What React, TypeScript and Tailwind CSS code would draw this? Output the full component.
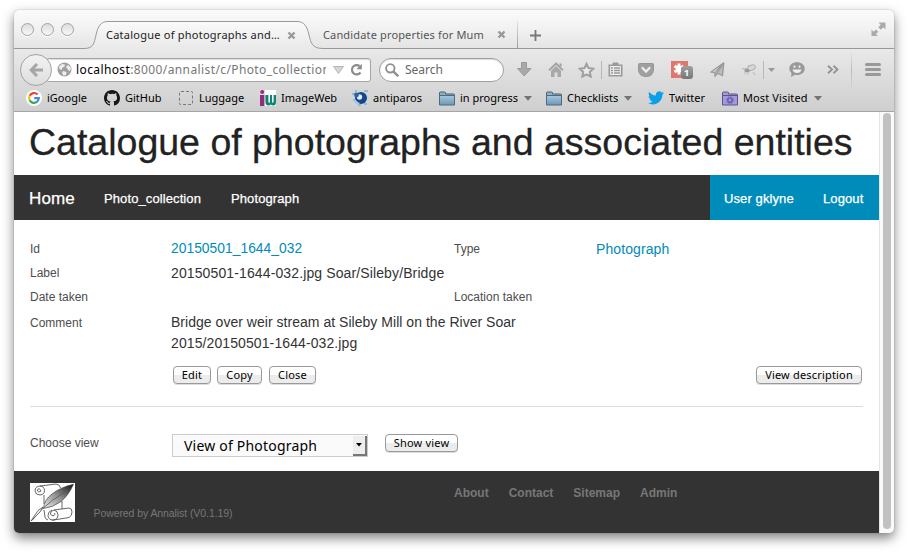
import type { ReactNode } from "react";

const UI = "font-['Noto_Sans',sans-serif]";

function Cell({ w, children }: { w: string; children?: ReactNode }) {
  return <div className={`flex h-full shrink-0 items-center justify-center ${w}`}>{children}</div>;
}

function Separator({ className }: { className: string }) {
  return <div className={`w-px shrink-0 ${className}`} />;
}

function Light() {
  return (
    <span className="h-[13px] w-[13px] rounded-full border border-[#a3a3a3] bg-linear-to-b from-[#dcdcdc] to-[#f8f8f8] shadow-[0_1px_0_#fff]" />
  );
}

function CloseGlyph() {
  return (
    <svg width="9" height="9" viewBox="0 0 9 9">
      <path d="M1.5 1.5 7.5 7.5M7.5 1.5 1.5 7.5" stroke="#999" strokeWidth="2.4" />
      <path d="M3.5 4.5h2" stroke="#999" strokeWidth="2" />
    </svg>
  );
}

function Caret() {
  return (
    <svg className="ml-1.5 shrink-0" width="8" height="5" viewBox="0 0 8 5">
      <path d="M0 0h8L4 4.8z" fill="#737373" />
    </svg>
  );
}

function Folder() {
  return (
    <svg width="16" height="15" viewBox="0 0 16 15">
      <defs>
        <linearGradient id="folder" x1="0" y1="0" x2="0" y2="1">
          <stop offset="0" stopColor="#a9c8dc" />
          <stop offset="1" stopColor="#6b97b6" />
        </linearGradient>
      </defs>
      <path d="M.5 13.5V2q0-1 1-1h4q1 0 1 1v1h8q1 0 1 1v9.500z" fill="#8fb0c5" stroke="#48606f" />
      <path d="M.5 4.500h15v9.500H.5z" fill="url(#folder)" stroke="#4c6a80" />
    </svg>
  );
}

function VisitedFolder() {
  return (
    <svg width="16" height="15" viewBox="0 0 16 15">
      <path d="M.5 13.500V2q0-1 1-1h4q1 0 1 1v1h8q1 0 1 1v9.500z" fill="#a59dd2" stroke="#5d548f" />
      <path d="M.5 4.500h15v9.500H.5z" fill="#a39bd8" stroke="#5d548f" />
      <circle cx="8" cy="9.200" r="2.200" fill="none" stroke="#6a5fb8" strokeWidth="1.600" />
      <circle cx="8" cy="9.200" r="3.500" fill="none" stroke="#6a5fb8" strokeWidth="1" strokeDasharray="1.370 1.370" />
    </svg>
  );
}

function GoogleIcon() {
  return (
    <svg width="16" height="16" viewBox="0 0 16 16">
      <circle cx="8" cy="8" r="8" fill="#fff" />
      <g fill="none" strokeWidth="2.200">
        <path d="M11.600 4.500A4.900 4.900 0 0 0 3.700 5.700" stroke="#ea4335" />
        <path d="M3.700 5.700a4.900 4.900 0 0 0 0 4.600" stroke="#fbbc05" />
        <path d="M3.700 10.300a4.900 4.900 0 0 0 7.500 1.400" stroke="#34a853" />
        <path d="M8.200 8.100h4.600a4.900 4.900 0 0 1-1.600 3.600" stroke="#4285f4" />
      </g>
    </svg>
  );
}

function GithubIcon() {
  return (
    <svg width="16" height="16" viewBox="0 0 16 16">
      <path
        fill="#181616"
        d="M8 0C3.580 0 0 3.580 0 8c0 3.540 2.290 6.530 5.470 7.590.4.070.55-.170.55-.380 0-.190-.010-.820-.010-1.490-2.010.370-2.530-.490-2.690-.940-.090-.230-.480-.940-.820-1.130-.280-.150-.680-.520-.010-.530.630-.010 1.080.580 1.230.820.720 1.210 1.870.870 2.330.660.070-.520.280-.870.510-1.070-1.780-.2-3.640-.890-3.640-3.950 0-.870.310-1.590.820-2.150-.080-.2-.360-1.020.080-2.120 0 0 .670-.210 2.200.820A7.600 7.600 0 0 1 8 3.870c.680 0 1.360.090 2 .260 1.530-1.040 2.200-.820 2.200-.820.440 1.100.160 1.920.080 2.120.510.560.820 1.270.820 2.150 0 3.070-1.870 3.750-3.650 3.950.290.250.540.730.540 1.480 0 1.070-.010 1.930-.010 2.200 0 .210.150.460.550.380A8 8 0 0 0 16 8c0-4.420-3.580-8-8-8z"
      />
    </svg>
  );
}

function ImageWebIcon() {
  return (
    <svg width="16" height="16" viewBox="0 0 16 16">
      <path d="M0 0h16v16H0z" fill="#fff" />
      <path d="M0 0h5v16H0z" fill="#e3dbe0" />
      <circle cx="2.200" cy="2" r="2" fill="#8f2d7c" />
      <path d="M0 5h4.300v11H0z" fill="#8f2d7c" />
      <path d="M5.400 5h3v6.500q0 1.200.8 1.200t.8-1.200V5h2v6.500q0 1.200.8 1.200t.8-1.200V5H16v7q0 3.500-2.800 3.500-1.400 0-2.300-1-.8 1-2.300 1-3.200 0-3.200-3.500z" fill="#0d8474" />
    </svg>
  );
}

function AntiparosIcon() {
  return (
    <svg width="16" height="16" viewBox="0 0 16 16">
      <path d="M0 0h16v16H0z" fill="#cdd6dd" />
      <path d="M0 3h3v2H0zM3 0h2v2H3zM1 9h3v2H1zM12 13h3v2h-3zM6 14h3v2H6zM12 0h4v2h-4z" fill="#9fb6ca" />
      <circle cx="9" cy="8" r="6" fill="#174689" />
      <circle cx="7.500" cy="7" r="2.700" fill="#e4ecf3" />
      <circle cx="4.500" cy="5" r="2.400" fill="#2d62a8" />
      <path d="M3 9q2 3 5 4l-3 2-3-3z" fill="#b3c6d8" />
    </svg>
  );
}

function TwitterIcon() {
  return (
    <svg width="16" height="14" viewBox="0 0 24 20">
      <path
        fill="#0a9fe8"
        d="M24 2.400c-.900.400-1.800.700-2.800.800 1-.600 1.800-1.600 2.200-2.700-1 .600-2 1-3.100 1.200A4.920 4.920 0 0 0 11.900 6.200C7.700 6 4.100 4 1.700 1 .4 3.200 1 6.100 3.200 7.600c-.800 0-1.600-.2-2.200-.600-.1 2.300 1.600 4.400 3.900 4.900-.7.200-1.500.2-2.200.1.600 2 2.400 3.400 4.600 3.400A9.900 9.900 0 0 1 0 17.500 13.940 13.940 0 0 0 7.500 19.700c9.100 0 14.300-7.700 14-14.600 1-.700 1.800-1.600 2.500-2.700z"
      />
    </svg>
  );
}

function TitleBar() {
  return (
    <div className="flex h-[39px] shrink-0 items-end bg-linear-to-b from-[#fbfbfb] via-[#f1f1f1] to-[#e4e4e4]">
      <div className="flex h-full w-[70px] shrink-0 gap-[7px] border-b border-[#999] pt-[13px] pl-[7px]">
        <Light />
        <Light />
        <Light />
      </div>
      <div className="relative h-7 w-[239px] shrink-0">
        <svg className="absolute inset-0" width="240" height="28" viewBox="0 0 240 28">
          <defs>
            <linearGradient id="tab" x1="0" y1="0" x2="0" y2="1">
              <stop offset="0" stopColor="#fafafa" />
              <stop offset="1" stopColor="#e9e9e9" />
            </linearGradient>
          </defs>
          <path d="M0 27.500C10 27.500 10 22 12 14 14 5 17 .5 24 .5H213C220 .5 223 5 225 14 227 22 228 27.500 239 27.500V28H0z" fill="url(#tab)" />
          <path d="M0 27.500C10 27.500 10 22 12 14 14 5 17 .5 24 .5H213C220 .5 223 5 225 14 227 22 228 27.500 239 27.500" fill="none" stroke="#999" />
        </svg>
        <div className="relative flex h-full items-center pl-[22px] text-[11px] text-[#222]">
          <span className="w-[181px] tracking-[0.240px] whitespace-nowrap">Catalogue of photographs and…</span>
          <CloseGlyph />
        </div>
      </div>
      <div className="flex h-7 w-[194px] shrink-0 items-center border-b border-[#999] text-[11px] text-[#555]">
        <span className="w-[174px] pt-px tracking-[0.150px] whitespace-nowrap">Candidate properties for Mum</span>
        <CloseGlyph />
      </div>
      <div className="h-7 w-px bg-linear-to-b from-[#e4e4e4] to-[#999]" />
      <div className="flex h-full flex-1 justify-between border-b border-[#999]">
        <svg className="mt-[20px] ml-3" width="11" height="11" viewBox="0 0 11 11">
          <path d="M5.500 0v11M0 5.500h11" stroke="#777" strokeWidth="1.800" />
        </svg>
        <svg className="mt-3 mr-2" width="15" height="15" viewBox="0 0 15 15">
          <path d="M7.500.5h7v7L12.300 5.300 9.800 7.800 7.300 5.300 9.700 2.800zM7 14H.5V7.500L2.700 9.700 5 7.400 7.300 9.700 4.900 12z" fill="#aaa" />
        </svg>
      </div>
    </div>
  );
}

function AddressBar() {
  return (
    <div className="flex h-[41px] shrink-0 items-center">
      <div className="z-10 ml-1.5 flex h-8 w-8 shrink-0 items-center justify-center rounded-full border border-[#a3a3a3] bg-linear-to-b from-[#f2f2f2] to-[#dedede]">
        <svg width="14" height="14" viewBox="0 0 14 14">
          <path d="M8 1 2.200 7 8 13M2.500 7H14" fill="none" stroke="#a6a6a6" strokeWidth="3" />
        </svg>
      </div>
      <div className="-ml-[6px] flex h-6 w-[325px] shrink-0 items-center rounded-[3px] border border-[#a5a5a5] bg-white pl-[10px] shadow-[inset_0_1px_1px_#ddd]">
        <svg width="15" height="15" viewBox="0 0 15 15">
          <circle cx="7.500" cy="7.500" r="7" fill="#a0a0a0" />
          <path d="M2 4.500 5 2l3 .5-.5 2-2 1-1 2.500L2.500 7zM8.500 5l3-2 2.500 3-1 3-2-1-1-2zM6 9l3.500 1-.5 3-2.500.8L5 11z" fill="#eee" />
        </svg>
        <div className="ml-[4px] w-[250px] overflow-hidden text-[12px] tracking-[0.390px] whitespace-nowrap text-[#777]">
          <span className="text-black">localhost</span>:8000/annalist/c/Photo_collection
        </div>
        <svg className="ml-[7px]" width="11" height="8" viewBox="0 0 11 8">
          <path d="M.5.5h10L5.500 7.500z" fill="#d6d6d6" stroke="#b5b5b5" />
        </svg>
        <svg className="ml-[6px]" width="13" height="13" viewBox="0 0 13 13">
          <path d="M10.500 9.500A4.700 4.700 0 1 1 9.500 3" fill="none" stroke="#8c8c8c" strokeWidth="2.200" />
          <path d="M11.800.8V6.300H6.300z" fill="#8c8c8c" />
        </svg>
      </div>
      <div className="ml-2 flex h-6 w-[125px] shrink-0 items-center rounded-full border border-[#a0a0a0] bg-white pl-[5px] shadow-[inset_0_1px_1px_#ddd]">
        <svg width="14" height="14" viewBox="0 0 14 14">
          <circle cx="5.300" cy="5.300" r="4.200" fill="none" stroke="#909090" strokeWidth="1.900" />
          <path d="m8.300 8.300 5 5" stroke="#909090" strokeWidth="2.400" />
        </svg>
        <span className="ml-[6px] text-[12px] text-[#666]">Search</span>
      </div>
      <div className="ml-1 flex h-full flex-1 items-center">
        <Cell w="w-8">
          <svg width="15" height="15" viewBox="0 0 15 15">
            <path d="M4.500.5h5v6h4.500L7.200 14 .5 6.500h4z" fill="#a8a8a8" stroke="#999" />
          </svg>
        </Cell>
        <Cell w="w-8">
          <svg width="16" height="15" viewBox="0 0 16 15">
            <path d="M1 8.300 8 1.500l7 6.800" fill="none" stroke="#a0a0a0" strokeWidth="1.800" />
            <path d="M3 8.800 8 4l5 4.800V15H9.500v-4.500h-3V15H3z" fill="#a8a8a8" />
            <path d="M11.500 1.500h2v3h-2z" fill="#a0a0a0" />
          </svg>
        </Cell>
        <Cell w="w-[29px]">
          <svg width="17" height="16" viewBox="0 0 17 16">
            <path d="m8.500 1.800 2 4.300 4.800.6-3.500 3.200.9 4.700-4.200-2.300-4.200 2.300.9-4.700L1.700 6.700l4.800-.6z" fill="#e9e9e9" stroke="#a0a0a0" strokeWidth="2" />
          </svg>
        </Cell>
        <Separator className="h-[18px] bg-[#b8b8b8]" />
        <Cell w="w-[27px]">
          <svg width="15" height="15" viewBox="0 0 15 15">
            <path d="M5 3V1h5v2" fill="#999" stroke="#999" />
            <path d="M1.300 3.300h12.400v10.400H1.300z" fill="#eee" stroke="#999" strokeWidth="1.600" />
            <path d="M3 6h2m1 0h6M3 8.500h2m1 0h6M3 11h2m1 0h6" stroke="#999" strokeWidth="1.400" />
          </svg>
        </Cell>
        <Cell w="w-[34px]">
          <svg width="16" height="14" viewBox="0 0 16 14">
            <path d="M1.500.5h13q1 0 1 1V6Q15.500 13.500 8 13.500T.5 6V1.500q0-1 1-1z" fill="#a0a0a0" stroke="#959595" />
            <path d="m4.500 5 3.500 3.500L11.500 5" fill="none" stroke="#eee" strokeWidth="2.300" strokeLinecap="round" />
          </svg>
        </Cell>
        <Cell w="w-9">
          <div className="relative -left-[2px] h-[17px] w-[17px] bg-[#dd7770]">
            <svg width="17" height="17" viewBox="0 0 17 17">
              <path d="M8 2.500v11M3.500 5l9 6M3.500 11l9-6" stroke="#fff" strokeWidth="3" />
            </svg>
            <span className="absolute top-[5px] left-[10px] flex h-[13px] w-3 items-center justify-center rounded-[3px] bg-linear-to-b from-[#a0a0a0] to-[#777] text-[9px] font-bold text-white">
              1
            </span>
          </div>
        </Cell>
        <Cell w="w-9">
          <svg width="15" height="15" viewBox="0 0 15 15">
            <path d="M13.800.8 1 10l3.800.7z" fill="#d5d5d5" stroke="#999" strokeWidth="1.200" />
            <path d="M13.800.8 7 11l5.500 2.500zM5 10.500V14.300l2-2.800" fill="#bbb" stroke="#999" strokeWidth="1.300" />
          </svg>
        </Cell>
        <Cell w="w-7">
          <svg width="16" height="14" viewBox="0 0 16 14">
            <path d="M1 6q3-1 5 0l4 1M3 11l4-4M6 12l2-4M12 9l2 3M9 5 7 2" fill="none" stroke="#b5b5b5" />
            <ellipse cx="10.500" cy="5" rx="4" ry="2.500" fill="#d8d8d8" stroke="#b0b0b0" transform="rotate(-25 10 5)" />
            <ellipse cx="6" cy="7.500" rx="2.800" ry="1.800" fill="#999" />
          </svg>
        </Cell>
        <Separator className="h-[18px] bg-[#b8b8b8]" />
        <Cell w="w-[15px]">
          <svg width="7" height="4" viewBox="0 0 7 4">
            <path d="M0 0h7L3.500 4z" fill="#999" />
          </svg>
        </Cell>
        <Cell w="w-9">
          <svg width="16" height="15" viewBox="0 0 16 15">
            <path d="M8 .3c4.300 0 7.700 2.600 7.700 6.400S12.300 13 8 13q-1 0-2-.2L2 15l.6-3.800Q.3 9.500.3 6.700C.3 2.900 3.700.3 8 .3z" fill="#999" />
            <path d="M5.500 3.500v2.200M10.500 3.500v2.200" stroke="#eee" strokeWidth="1.800" />
            <path d="M3.500 7.500h9Q11.500 11 8 11T3.500 7.500z" fill="#eee" />
          </svg>
        </Cell>
        <Cell w="w-9">
          <svg width="12" height="9" viewBox="0 0 12 9">
            <path d="m1 .7 4 3.800-4 3.800M6.500.7l4 3.800-4 3.800" fill="none" stroke="#949494" strokeWidth="1.900" />
          </svg>
        </Cell>
        <Separator className="h-9 bg-linear-to-b from-[#e2e2e2] via-[#bbb] to-[#d5d5d5]" />
        <Cell w="w-[42px]">
          <div className="flex flex-col gap-[2px]">
            <span className="h-[3px] w-4 rounded-full bg-[#999]" />
            <span className="h-[3px] w-4 rounded-full bg-[#999]" />
            <span className="h-[3px] w-4 rounded-full bg-[#999]" />
          </div>
        </Cell>
      </div>
    </div>
  );
}

function Bookmark({ w, icon, label, caret = false }: { w: string; icon: ReactNode; label: string; caret?: boolean }) {
  return (
    <div className={`flex shrink-0 items-center ${w}`}>
      <span className="mr-[5px] flex w-4 shrink-0 justify-center">{icon}</span>
      <span className="whitespace-nowrap">{label}</span>
      {caret && <Caret />}
    </div>
  );
}

function BookmarksBar() {
  return (
    <div className="flex h-[22px] shrink-0 items-start border-b border-[#a5a5a5] pl-3">
      <div className="flex h-4 items-center text-[11px] text-black">
        <Bookmark w="w-[78px]" icon={<GoogleIcon />} label="iGoogle" />
        <Bookmark w="w-[74px]" icon={<GithubIcon />} label="GitHub" />
        <Bookmark
          w="w-[82px]"
          icon={<span className="h-[14px] w-[14px] rounded-[2px] border border-dashed border-[#777]" />}
          label="Luggage"
        />
        <Bookmark w="w-[92px]" icon={<ImageWebIcon />} label="ImageWeb" />
        <Bookmark w="w-[87px]" icon={<AntiparosIcon />} label="antiparos" />
        <Bookmark w="w-[107px]" icon={<Folder />} label="in progress" caret />
        <Bookmark w="w-[102px]" icon={<Folder />} label="Checklists" caret />
        <Bookmark w="w-[74px]" icon={<TwitterIcon />} label="Twitter" />
        <Bookmark w="w-[110px] tracking-[0.120px]" icon={<VisitedFolder />} label="Most Visited" caret />
      </div>
    </div>
  );
}

function Button({ w, children }: { w: string; children: ReactNode }) {
  return (
    <button
      className={`flex h-[18px] shrink-0 items-center justify-center rounded-[4px] border border-[#999] bg-linear-to-b from-white from-50% to-[#ececec] to-50% text-[11px] tracking-[0.180px] whitespace-nowrap text-black shadow-[0_1px_0_#ddd] ${UI} ${w}`}
    >
      {children}
    </button>
  );
}

function Label({ children }: { children: ReactNode }) {
  return <span className="text-[12px] text-[#4d4d4d]">{children}</span>;
}

function PageHeader() {
  return (
    <>
      <h1 className="h-[63px] shrink-0 pl-[15px] text-[37.5px] leading-[60px] whitespace-nowrap text-[#222] [-webkit-text-stroke:0.3px_#222]">
        Catalogue of photographs and associated entities
      </h1>
      <nav className="flex h-[45px] shrink-0 items-center bg-[#333] pt-[2px] text-[13px] tracking-[0.1px] text-white [-webkit-text-stroke:0.25px_white]">
        <a className="w-[75px] pl-[15px] text-[17px]">Home</a>
        <a className="w-[127px] pl-[15px]">Photo_collection</a>
        <a className="pl-[15px]">Photograph</a>
        <div className="-mt-[2px] ml-auto flex h-[45px] w-[169px] items-center bg-[#008cba] pt-[2px]">
          <a className="w-[99px] pl-[14px]">User gklyne</a>
          <a className="pl-[14px]">Logout</a>
        </div>
      </nav>
    </>
  );
}

function RecordView() {
  return (
    <main className="flex flex-1 flex-col px-4 pt-[17px]">
      <div className="grid auto-rows-[24px] grid-cols-[141px_283px_142px_1fr] items-center text-[14px] text-[#333]">
        <Label>Id</Label>
        <a className="text-[13.8px] tracking-[0.040px] text-[#008cba]">20150501_1644_032</a>
        <Label>Type</Label>
        <a className="tracking-[0.1px] text-[#008cba]">Photograph</a>
        <Label>Label</Label>
        <span className="col-span-3 tracking-[0.120px] whitespace-nowrap">20150501-1644-032.jpg Soar/Sileby/Bridge</span>
        <Label>Date taken</Label>
        <span />
        <Label>Location taken</Label>
      </div>
      <div className="mt-[3px] flex text-[14px] leading-[21px] text-[#333]">
        <div className="w-[141px]">
          <Label>Comment</Label>
        </div>
        <p>
          <span className="tracking-[0.030px]">Bridge over weir stream at Sileby Mill on the River Soar</span>
          <br />
          <span className="tracking-[0.100px]">2015/20150501-1644-032.jpg</span>
        </p>
      </div>
      <div className="mt-[12px] flex pl-[143px]">
        <Button w="w-[38px]">Edit</Button>
        <Button w="ml-[6px] w-[45px]">Copy</Button>
        <Button w="ml-[7px] w-[47px]">Close</Button>
        <Button w="mr-px ml-auto w-[106px]">View description</Button>
      </div>
      <hr className="mt-[22px] border-[#ddd]" />
      <div className="mt-[27px] flex">
        <div className="w-[142px] leading-4">
          <Label>Choose view</Label>
        </div>
        <div className={`flex h-[23px] w-[196px] items-center justify-between border border-[#ccc] bg-[#fafafa] pl-[11px] text-[14px] text-black ${UI}`}>
          <span className="tracking-[0.200px] whitespace-nowrap">View of Photograph</span>
          <span className="flex h-[20px] w-[14px] items-center justify-center border-r-2 border-b-2 border-[#777] bg-[#eee]">
            <svg width="6" height="4" viewBox="0 0 6 4">
              <path d="M0 0h6L3 3.500z" fill="#000" />
            </svg>
          </span>
        </div>
        <Button w="ml-[17px] w-[73px]">Show view</Button>
      </div>
    </main>
  );
}

function ScrollLogo() {
  return (
    <svg className="bg-white" width="45" height="39" viewBox="0 0 45 39">
      <defs>
        <linearGradient id="quill" x1="0" y1="1" x2="1" y2="0">
          <stop offset="0" stopColor="#e8e8e8" />
          <stop offset="0.450" stopColor="#999" />
          <stop offset="0.800" stopColor="#444" />
          <stop offset="1" stopColor="#111" />
        </linearGradient>
      </defs>
      <g fill="none" stroke="#555" strokeWidth="0.900">
        <path d="M10 3 26 1q4 .5 4.500 4M14 12v9M32 18v8M14 27l1 7q0 2 3 3" />
        <path d="M10 3q-5 .5-5 5 .5 4 5 4 4.500-.5 4.500-4.500T10 3M9.500 5.500q-2.500.5-2 2.500 1 1.500 3 .5 1-2-1-2" />
        <path d="M22 27q-4 1.500-4 5.500.5 4.500 5 4.500 5-.5 5-5 0-4-4-5-4 1-3.500 4 1 2.500 3.500 1.500 1.500-1 .5-2.500" />
        <path d="m24 27 15-2q3 0 3 4t-3 5.500L22 37.300" />
      </g>
      <path d="M43.500 1.200Q30 4.500 22 11 14 17 13.500 25.500 23 24.500 31 18.500q7-5.500 12.500-17.300z" fill="url(#quill)" stroke="#333" strokeWidth=".6" />
      <path d="M38 7Q21 17 10 28L2 37.500" fill="none" stroke="#555" strokeWidth=".8" />
      <path d="M1 38 8 27.500l5-3.500-3 5z" fill="#eee" stroke="#444" strokeWidth=".7" />
    </svg>
  );
}

function Footer() {
  return (
    <footer className="flex h-[62px] shrink-0 bg-[#333] pt-3 pl-4 text-[#777]">
      <ScrollLogo />
      <span className="mt-[23px] ml-[18.500px] w-[360.500px] text-[10.500px] leading-[15px] tracking-[-0.080px]">
        Powered by Annalist (V0.1.19)
      </span>
      <div className="mt-[2px] flex h-4 gap-5 text-[12px] leading-4 font-bold">
        <a>About</a>
        <a>Contact</a>
        <a>Sitemap</a>
        <a>Admin</a>
      </div>
    </footer>
  );
}

export default function App() {
  return (
    <div className="h-[553px] w-[908px] overflow-hidden bg-white pt-[10px] pl-[14px]">
      <div className="flex h-[523px] w-[880px] flex-col overflow-hidden rounded-[5px] bg-white font-['Liberation_Sans',Arial,sans-serif] shadow-[0_0_1px_#666,0_5px_12px_rgba(0,0,0,0.5)]">
        <div className={UI}>
          <TitleBar />
          <div className="bg-linear-to-b from-[#e9e9e9] to-[#cecece]">
            <AddressBar />
            <BookmarksBar />
          </div>
        </div>
        <div className="flex min-h-0 flex-1">
          <div className="flex w-[865px] shrink-0 flex-col">
            <PageHeader />
            <RecordView />
            <Footer />
          </div>
          <div className="flex flex-1 justify-center border-l border-[#e5e5e5] bg-[#fafafa] pt-px pb-1">
            <div className="w-2 rounded-full bg-[#c1c1c1]" />
          </div>
        </div>
      </div>
    </div>
  );
}
